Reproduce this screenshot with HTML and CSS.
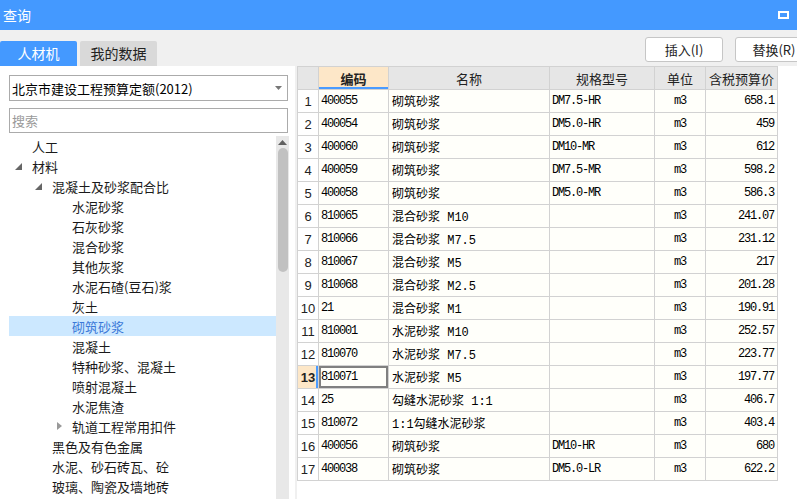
FILE: index.html
```html
<!DOCTYPE html>
<html lang="zh-CN">
<head>
<meta charset="utf-8">
<title>查询</title>
<link rel="stylesheet" href="styles.css">
</head>
<body>
<div class="window">
  <header class="titlebar">
    <span class="title">查询</span>
    <svg class="max-icon" width="11" height="8" viewBox="0 0 11 8"><rect x="1" y="1" width="9" height="6" fill="none" stroke="#fff" stroke-width="2"/></svg>
  </header>
  <div class="toolbar">
    <div class="tabs">
      <div class="tab active">人材机</div>
      <div class="tab">我的数据</div>
    </div>
    <div class="actions">
      <button class="btn">插入(I)</button>
      <button class="btn">替换(R)</button>
    </div>
  </div>
  <div class="main">
    <aside class="left">
      <div class="select">
        <span>北京市建设工程预算定额(2012)</span>
        <svg class="caret" width="7" height="4" viewBox="0 0 7 4"><path d="M0 0H7L3.5 4Z" fill="#777"/></svg>
      </div>
      <div class="search">搜索</div>
      <div class="tree-wrap">
        <ul class="tree">
          <li class="l0"><span class="tg"></span>人工</li>
          <li class="l0"><span class="tg"><svg width="7" height="7" viewBox="0 0 7 7"><path d="M7 0V7H0Z" fill="#666"/></svg></span>材料</li>
          <li class="l1"><span class="tg"><svg width="7" height="7" viewBox="0 0 7 7"><path d="M7 0V7H0Z" fill="#666"/></svg></span>混凝土及砂浆配合比</li>
          <li class="l2"><span class="tg"></span>水泥砂浆</li>
          <li class="l2"><span class="tg"></span>石灰砂浆</li>
          <li class="l2"><span class="tg"></span>混合砂浆</li>
          <li class="l2"><span class="tg"></span>其他灰浆</li>
          <li class="l2"><span class="tg"></span>水泥石碴(豆石)浆</li>
          <li class="l2"><span class="tg"></span>灰土</li>
          <li class="l2 active"><span class="tg"></span>砌筑砂浆</li>
          <li class="l2"><span class="tg"></span>混凝土</li>
          <li class="l2"><span class="tg"></span>特种砂浆、混凝土</li>
          <li class="l2"><span class="tg"></span>喷射混凝土</li>
          <li class="l2"><span class="tg"></span>水泥焦渣</li>
          <li class="l2"><span class="tg"><svg class="closed" width="5" height="8" viewBox="0 0 5 8"><path d="M0 0L5 4L0 8Z" fill="#999"/></svg></span>轨道工程常用扣件</li>
          <li class="l1"><span class="tg"></span>黑色及有色金属</li>
          <li class="l1"><span class="tg"></span>水泥、砂石砖瓦、砼</li>
          <li class="l1"><span class="tg"></span>玻璃、陶瓷及墙地砖</li>
        </ul>
        <div class="scrollbar">
          <svg class="up" width="9" height="5" viewBox="0 0 9 5"><path d="M0 5L4.5 0L9 5Z" fill="#606060"/></svg>
          <div class="thumb"></div>
        </div>
      </div>
    </aside>
    <section class="right">
      <table class="grid">
        <colgroup>
          <col class="c-rn"><col class="c-code"><col class="c-name"><col class="c-spec"><col class="c-unit"><col class="c-price">
        </colgroup>
        <thead>
          <tr><th></th><th class="hl">编码</th><th>名称</th><th>规格型号</th><th>单位</th><th>含税预算价</th></tr>
        </thead>
        <tbody>
          <tr><td class="rn">1</td><td class="a">400055</td><td class="n">砌筑砂浆</td><td class="a">DM7.5-HR</td><td class="a u">m3</td><td class="a p">658.1</td></tr>
          <tr><td class="rn">2</td><td class="a">400054</td><td class="n">砌筑砂浆</td><td class="a">DM5.0-HR</td><td class="a u">m3</td><td class="a p">459</td></tr>
          <tr><td class="rn">3</td><td class="a">400060</td><td class="n">砌筑砂浆</td><td class="a">DM10-MR</td><td class="a u">m3</td><td class="a p">612</td></tr>
          <tr><td class="rn">4</td><td class="a">400059</td><td class="n">砌筑砂浆</td><td class="a">DM7.5-MR</td><td class="a u">m3</td><td class="a p">598.2</td></tr>
          <tr><td class="rn">5</td><td class="a">400058</td><td class="n">砌筑砂浆</td><td class="a">DM5.0-MR</td><td class="a u">m3</td><td class="a p">586.3</td></tr>
          <tr><td class="rn">6</td><td class="a">810065</td><td class="n">混合砂浆 M10</td><td class="a"></td><td class="a u">m3</td><td class="a p">241.07</td></tr>
          <tr><td class="rn">7</td><td class="a">810066</td><td class="n">混合砂浆 M7.5</td><td class="a"></td><td class="a u">m3</td><td class="a p">231.12</td></tr>
          <tr><td class="rn">8</td><td class="a">810067</td><td class="n">混合砂浆 M5</td><td class="a"></td><td class="a u">m3</td><td class="a p">217</td></tr>
          <tr><td class="rn">9</td><td class="a">810068</td><td class="n">混合砂浆 M2.5</td><td class="a"></td><td class="a u">m3</td><td class="a p">201.28</td></tr>
          <tr><td class="rn">10</td><td class="a">21</td><td class="n">混合砂浆 M1</td><td class="a"></td><td class="a u">m3</td><td class="a p">190.91</td></tr>
          <tr><td class="rn">11</td><td class="a">810001</td><td class="n">水泥砂浆 M10</td><td class="a"></td><td class="a u">m3</td><td class="a p">252.57</td></tr>
          <tr><td class="rn">12</td><td class="a">810070</td><td class="n">水泥砂浆 M7.5</td><td class="a"></td><td class="a u">m3</td><td class="a p">223.77</td></tr>
          <tr class="cur"><td class="rn">13</td><td class="a sel">810071</td><td class="n">水泥砂浆 M5</td><td class="a"></td><td class="a u">m3</td><td class="a p">197.77</td></tr>
          <tr><td class="rn">14</td><td class="a">25</td><td class="n">勾缝水泥砂浆 1:1</td><td class="a"></td><td class="a u">m3</td><td class="a p">406.7</td></tr>
          <tr><td class="rn">15</td><td class="a">810072</td><td class="n">1:1勾缝水泥砂浆</td><td class="a"></td><td class="a u">m3</td><td class="a p">403.4</td></tr>
          <tr><td class="rn">16</td><td class="a">400056</td><td class="n">砌筑砂浆</td><td class="a">DM10-HR</td><td class="a u">m3</td><td class="a p">680</td></tr>
          <tr><td class="rn">17</td><td class="a">400038</td><td class="n">砌筑砂浆</td><td class="a">DM5.0-LR</td><td class="a u">m3</td><td class="a p">622.2</td></tr>
        </tbody>
      </table>
    </section>
  </div>
</div>
</body>
</html>
```

FILE: styles.css
```css
* { box-sizing: border-box; }
html, body { margin: 0; padding: 0; }
body {
  width: 797px;
  height: 499px;
  overflow: hidden;
  background: #f0f0f0;
  font-family: "Noto Sans CJK SC", "Liberation Sans", sans-serif;
  color: #1a1a1a;
}
.window { display: flex; flex-direction: column; height: 499px; }

.titlebar {
  height: 30px;
  flex: none;
  background: #4499ff;
  display: flex;
  align-items: center;
  justify-content: space-between;
  padding: 0 8px 0 3px;
}
.title { color: #fff; font-size: 14px; line-height: 30px; }
.max-icon { display: block; margin-top: -1px; }

.toolbar {
  height: 36px;
  flex: none;
  display: flex;
  align-items: flex-start;
}
.tabs { display: flex; gap: 3px; align-self: flex-end; }
.tab {
  width: 77px;
  height: 25px;
  line-height: 25px;
  text-align: center;
  font-size: 14px;
  background: #d9d9d9;
  color: #222;
  border-radius: 2px 2px 0 0;
}
.tab.active { background: #4499ff; color: #fff; }
.actions { margin-left: auto; margin-right: -16px; margin-top: 7px; display: flex; gap: 12px; }
.btn {
  width: 78px;
  height: 25px;
  padding: 0;
  background: #fff;
  border: 1px solid #c6c6c6;
  border-radius: 3px;
  font-family: "Noto Sans CJK SC", "Liberation Sans", sans-serif;
  font-size: 13px;
  color: #222;
}

.main { flex: 1; display: flex; gap: 2px; min-height: 0; }

.left {
  width: 295px;
  flex: none;
  background: #fff;
  padding: 9px 6px 0 9px;
  display: flex;
  flex-direction: column;
}
.select {
  height: 26px;
  width: 279px;
  border: 1px solid #ababab;
  display: flex;
  align-items: center;
  justify-content: space-between;
  padding: 0 5px 0 2px;
  font-size: 13px;
  color: #000;
}
.caret { display: block; }
.search {
  margin-top: 7px;
  height: 25px;
  width: 279px;
  border: 1px solid #ababab;
  padding-left: 2px;
  font-size: 13px;
  line-height: 23px;
  color: #9a9a9a;
}
.tree-wrap { margin-top: 3px; flex: 1; display: flex; min-height: 0; }
.tree { list-style: none; margin: 0; padding: 0; flex: 1; }
.tree li {
  height: 20px;
  display: flex;
  align-items: center;
  font-size: 13px;
  color: #1a1a1a;
  white-space: nowrap;
}
.tree .tg { width: 17px; flex: none; display: flex; align-items: center; height: 20px; }
.tree .tg svg { display: block; }
.tree .tg .closed { margin-left: 2px; }
.tree .l0 { padding-left: 6px; }
.tree .l1 { padding-left: 26px; }
.tree .l2 { padding-left: 46px; }
.tree li.active { background: #cce8ff; color: #3b78d8; }

.scrollbar {
  width: 13px;
  flex: none;
  background: #e8e8e8;
  display: flex;
  flex-direction: column;
  align-items: center;
}
.scrollbar .up { display: block; margin-top: 4px; }
.thumb {
  margin-top: 3px;
  width: 10px;
  height: 124px;
  border-radius: 5px;
  background: #c1c1c1;
}

.right { flex: 1; background: #fff; }

.grid {
  border-collapse: collapse;
  table-layout: fixed;
  width: 481px;
  border: 1px solid #cbcbcb;
}
.c-rn { width: 21px; }
.c-code { width: 70px; }
.c-name { width: 161px; }
.c-spec { width: 105px; }
.c-unit { width: 51px; }
.c-price { width: 72px; }
.grid tr { height: 23px; }
.grid th, .grid td {
  border: 1px solid #d2d2d2;
  padding: 0 2px;
  white-space: nowrap;
  overflow: hidden;
}
.grid th {
  background: #e6e6e6;
  font-weight: normal;
  font-size: 13px;
  color: #222;
  text-align: center;
}
.grid th.hl {
  background: #fde7c8;
  font-weight: bold;
  box-shadow: inset 0 -2px 0 #4a9bff;
}
.grid td {
  background: #fffffa;
  font-family: "Liberation Mono", "Noto Sans CJK SC", monospace;
  font-size: 12px;
  color: #000;
}
.grid td.a { letter-spacing: -1.2px; }
.grid td.n { padding-left: 3px; }
.grid td.u { text-align: center; }
.grid td.p { text-align: right; padding-right: 3px; }
.grid td.rn {
  background: #fff;
  font-family: "Liberation Sans", sans-serif;
  font-size: 13px;
  text-align: center;
  padding: 0;
  color: #222;
}
.grid tr.cur td.rn {
  background: #fde7c8;
  font-weight: bold;
  box-shadow: inset -2px 0 0 #4a9bff;
}
.grid td.sel { box-shadow: inset 0 0 0 2px #808080; }
```
